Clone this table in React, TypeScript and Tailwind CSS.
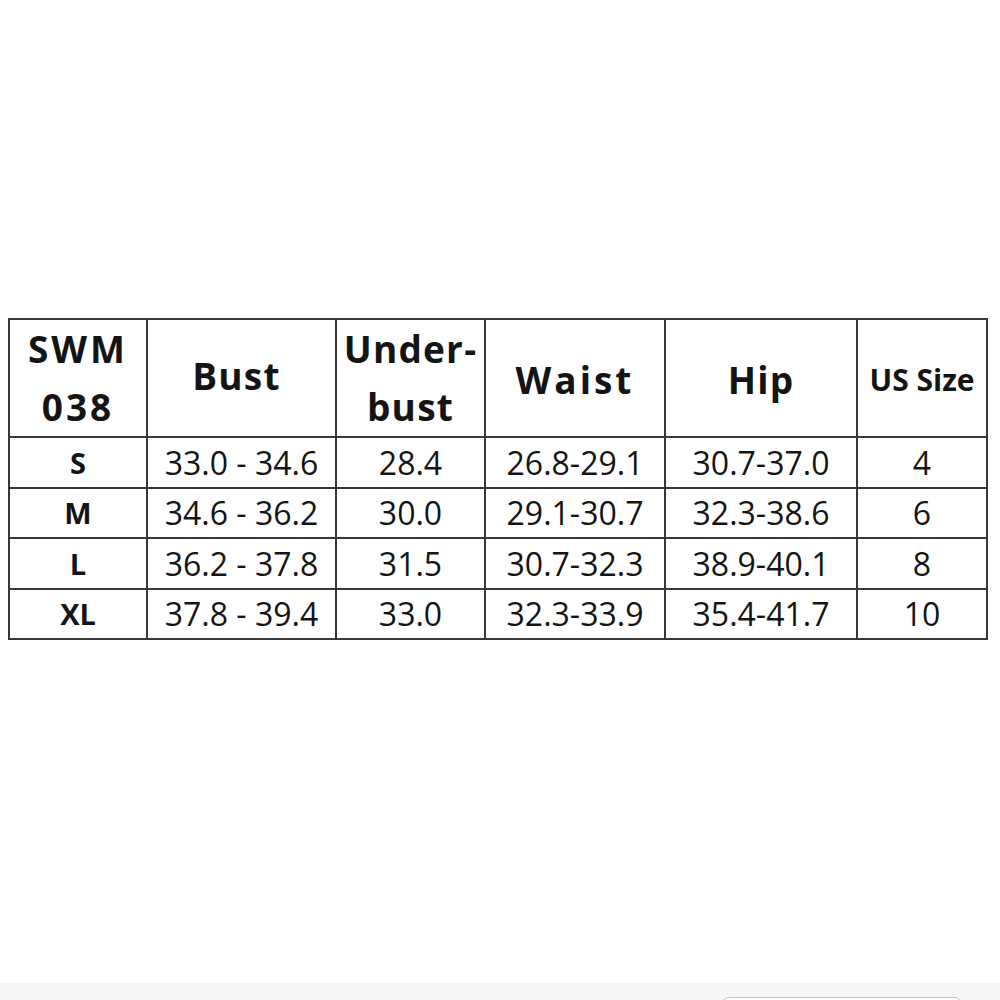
import React from 'react';

const rows = [
    { size: 'S', bust: '33.0 - 34.6', under: '28.4', waist: '26.8-29.1', hip: '30.7-37.0', us: '4', h: 'h-[51px]' },
    { size: 'M', bust: '34.6 - 36.2', under: '30.0', waist: '29.1-30.7', hip: '32.3-38.6', us: '6', h: 'h-[50px]' },
    { size: 'L', bust: '36.2 - 37.8', under: '31.5', waist: '30.7-32.3', hip: '38.9-40.1', us: '8', h: 'h-[51px]' },
    { size: 'XL', bust: '37.8 - 39.4', under: '33.0', waist: '32.3-33.9', hip: '35.4-41.7', us: '10', h: 'h-[50px]' },
];

const cell = 'border-2 border-[#383838] text-center align-middle p-0';

export default function App() {
    return (
        <div
            className="w-[1000px] h-[1000px] bg-white flex flex-col text-[#141414]"
            style={{ fontFamily: '"Open Sans", "Noto Sans", sans-serif' }}
        >
            <div className="pt-[318px] pl-[8px]">
                <table className="table-fixed border-collapse w-[978px]">
                    <colgroup>
                        <col className="w-[138px]" />
                        <col className="w-[189px]" />
                        <col className="w-[149px]" />
                        <col className="w-[180px]" />
                        <col className="w-[192px]" />
                        <col className="w-[130px]" />
                    </colgroup>
                    <thead>
                        <tr className="h-[118px] font-bold text-[37px] tracking-[1.2px]">
                            <th className={cell}>
                                <div className="leading-[58px] tracking-[3px]">SWM<br />038</div>
                            </th>
                            <th className={cell}><div className="pb-[4px] pr-[10px]">Bust</div></th>
                            <th className={cell}>
                                <div className="leading-[58px]">Under-<br />bust</div>
                            </th>
                            <th className={cell}><div className="pt-[4px] tracking-[3px]">Waist</div></th>
                            <th className={cell}><div className="pt-[4px]">Hip</div></th>
                            <th className={cell + ' text-[30px] tracking-normal'}><div className="pt-[2px]">US Size</div></th>
                        </tr>
                    </thead>
                    <tbody className="text-[32px]">
                        {rows.map((r) => (
                            <tr key={r.size} className={r.h}>
                                <td className={cell + ' font-bold text-[29px]'}>{r.size}</td>
                                <td className={cell}>{r.bust}</td>
                                <td className={cell}>{r.under}</td>
                                <td className={cell}>{r.waist}</td>
                                <td className={cell}>{r.hip}</td>
                                <td className={cell}>{r.us}</td>
                            </tr>
                        ))}
                    </tbody>
                </table>
            </div>
            <div className="flex-1" />
            <div className="h-[17px] bg-[#f7f5f5] flex justify-end pr-[36px] pt-[14px] overflow-hidden">
                <div className="w-[244px] h-[20px] rounded-[10px] border border-[#c4c2c2] bg-white" />
            </div>
        </div>
    );
}
